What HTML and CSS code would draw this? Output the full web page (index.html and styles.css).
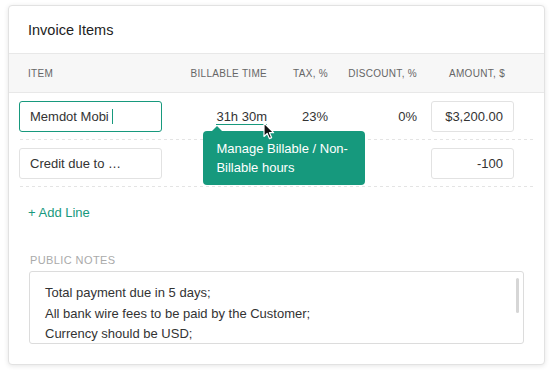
FILE: index.html
```html
<!DOCTYPE html>
<html lang="en">
<head>
    <meta charset="UTF-8">
    <meta name="viewport" content="width=device-width, initial-scale=1.0">
    <title>Invoice Items</title>
    <link rel="stylesheet" href="styles.css">
</head>
<body>
    <div class="card">
        <div class="card-header">Invoice Items</div>

        <div class="cols">
            <div class="col-item">Item</div>
            <div class="col-right">Billable time</div>
            <div class="col-right">Tax, %</div>
            <div class="col-right">Discount, %</div>
            <div class="col-amount">Amount, $</div>
        </div>

        <div class="line">
            <div class="field focused">Memdot Mobi<span class="caret"></span></div>
            <div class="cell">
                <span class="hours">31h 30m
                    <div class="tooltip">Manage Billable / Non-Billable hours</div>
                    <svg class="pointer" width="12" height="18" viewBox="0 0 12 18">
                        <path d="M1 1 L1 14.5 L4.2 11.5 L6.4 16.6 L8.6 15.6 L6.4 10.7 L10.6 10.7 Z" fill="#111" stroke="#fff" stroke-width="1.2" stroke-linejoin="round"/>
                    </svg>
                </span>
            </div>
            <div class="cell">23%</div>
            <div class="cell">0%</div>
            <div class="field amount">$3,200.00</div>
        </div>

        <div class="line">
            <div class="field">Credit due to …</div>
            <div class="cell"></div>
            <div class="cell"></div>
            <div class="cell"></div>
            <div class="field amount">-100</div>
        </div>

        <div class="add-line">+ Add Line</div>

        <div class="notes">
            <div class="notes-label">Public notes</div>
            <div class="notes-box">
                <p>Total payment due in 5 days;</p>
                <p>All bank wire fees to be paid by the Customer;</p>
                <p>Currency should be USD;</p>
                <div class="scroll-thumb"></div>
            </div>
        </div>
    </div>
</body>
</html>
```

FILE: styles.css
```css
body {
    margin: 0;
    padding: 5px 8px;
    background: #fff;
    font-family: "Liberation Sans", Arial, sans-serif;
    font-size: 13px;
    color: #333;
}
.card {
    background: #fff;
    border: 1px solid #e2e2e2;
    border-radius: 4px;
    box-shadow: 0 1px 5px rgba(0, 0, 0, 0.1);
    padding-bottom: 20px;
}
.card-header {
    height: 47px;
    display: flex;
    align-items: center;
    padding: 0 19px;
    font-size: 14.5px;
    color: #222;
    border-bottom: 1px solid #e8e8e8;
}
.cols,
.line {
    display: grid;
    grid-template-columns: 143px 105px 61px 89px 97px;
    align-items: center;
}
.cols {
    height: 38px;
    padding: 0 10px;
    background: #f7f7f7;
    border-bottom: 1px solid #e8e8e8;
    font-size: 10px;
    letter-spacing: 0.3px;
    text-transform: uppercase;
    color: #666;
}
.col-item {
    padding-left: 9px;
}
.col-right {
    text-align: right;
}
.col-amount {
    text-align: right;
    padding-right: 9px;
}
.line {
    margin: 0 10px;
    padding: 8px 0;
    background-image: linear-gradient(to right, #e4e4e4 50%, transparent 50%);
    background-size: 6px 1px;
    background-repeat: repeat-x;
    background-position: 1px bottom;
}
.field {
    height: 31px;
    box-sizing: border-box;
    border: 1px solid #e2e2e2;
    border-radius: 3px;
    padding: 0 10px;
    display: flex;
    align-items: center;
    white-space: nowrap;
}
.field.focused {
    border-color: #17997d;
}
.caret {
    display: inline-block;
    width: 1px;
    height: 15px;
    margin-left: 3px;
    background: #17997d;
}
.field.amount {
    width: 83px;
    justify-self: end;
    justify-content: flex-end;
}
.cell {
    text-align: right;
}
.hours {
    position: relative;
    display: inline-block;
    line-height: 14px;
    border-bottom: 1px solid #17997d;
}
.tooltip {
    position: absolute;
    left: -13px;
    top: 21px;
    width: 136px;
    padding: 8px 13px;
    background: #16997d;
    color: #fff;
    border-radius: 4px;
    text-align: left;
    line-height: 19px;
    z-index: 2;
}
.tooltip::before {
    content: "";
    position: absolute;
    left: 9px;
    top: -5px;
    border-left: 5px solid transparent;
    border-right: 5px solid transparent;
    border-bottom: 5px solid #16997d;
}
.pointer {
    position: absolute;
    left: 47px;
    top: 12px;
    z-index: 3;
}
.add-line {
    padding: 18px 19px 0;
    line-height: 16px;
    color: #17997d;
}
.notes {
    padding: 32px 20px 0;
}
.notes-label {
    font-size: 11px;
    letter-spacing: 0.4px;
    text-transform: uppercase;
    color: #aaa;
    line-height: 14px;
    padding-left: 1px;
    margin-bottom: 4px;
}
.notes-box {
    position: relative;
    height: 73px;
    box-sizing: border-box;
    border: 1px solid #dcdcdc;
    border-radius: 3px;
    padding: 11px 15px 0;
    overflow: hidden;
}
.notes-box p {
    margin: 0;
    line-height: 20.5px;
}
.scroll-thumb {
    position: absolute;
    right: 4px;
    top: 6px;
    width: 3px;
    height: 35px;
    border-radius: 2px;
    background: #d6d6d6;
}
```
